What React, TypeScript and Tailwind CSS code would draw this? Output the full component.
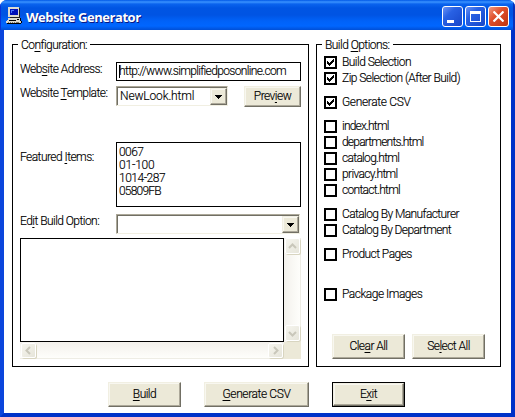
import type { ReactNode } from "react";

function U({ children }: { children: ReactNode }) {
  return <span className="underline decoration-1 underline-offset-[2px]">{children}</span>;
}

const raised =
  "flex items-center justify-center whitespace-nowrap bg-[#ece9d8] border-t border-l border-t-[#f1efe2] border-l-[#f1efe2] border-r border-b border-r-[#716f64] border-b-[#716f64] shadow-[inset_-1px_-1px_0_#aca899,inset_1px_1px_0_#f8f7f0]";

function PushButton({ className, children }: { className: string; children: ReactNode }) {
  return <button className={`${raised} ${className}`}>{children}</button>;
}

function Combo({ className, children }: { className: string; children?: ReactNode }) {
  return (
    <div
      className={`flex h-5 items-stretch border border-t-[#aca899] border-l-[#aca899] border-r-[#f1efe2] border-b-[#f1efe2] bg-white shadow-[inset_1px_1px_0_#716f64] ${className}`}
    >
      <div className="flex flex-1 items-center pl-[3px] tracking-[-0.15px]">{children}</div>
      <div className={`${raised} mt-px w-[17px]`}>
        <svg width="7" height="4" viewBox="0 0 7 4" shapeRendering="crispEdges">
          <path d="M0 0h7v1H6v1H5v1H4v1H3V3H2V2H1V1H0z" />
        </svg>
      </div>
    </div>
  );
}

function Check({ label, checked = false, className = "" }: { label: string; checked?: boolean; className?: string }) {
  return (
    <label className={`flex h-4 items-start ${className}`}>
      <span className="flex size-[13px] shrink-0 items-center justify-center border-2 border-black bg-white">
        {checked && (
          <svg width="7" height="7" viewBox="0 0 7 7" shapeRendering="crispEdges">
            <path d="M0 2h1v1h1v1h1V3h1V2h1V1h1V0h1v3H6v1H5v1H4v1H3v1H2V6H1V5H0z" />
          </svg>
        )}
      </span>
      <span className="ml-[5px] whitespace-nowrap leading-[13px]">{label}</span>
    </label>
  );
}

function ScrollButton({ path, className }: { path: string; className: string }) {
  return (
    <div
      className={`flex items-center justify-center rounded-[2px] border border-white bg-gradient-to-br from-[#f6f5ee] to-[#e6e5da] shadow-[1px_1px_0_#d8d5c0] ${className}`}
    >
      <svg width="9" height="9" viewBox="0 0 9 9" fill="none" stroke="#c9c7ba" strokeWidth="2">
        <path d={path} />
      </svg>
    </div>
  );
}

function Group({ legend, className, children }: { legend: ReactNode; className: string; children: ReactNode }) {
  return (
    <section className={`h-[323px] border border-black ${className}`}>
      <div className="-mt-[7px] flex h-[13px]">
        <span className="ml-[5px] whitespace-nowrap bg-white px-[3px] leading-[15px]">{legend}</span>
      </div>
      {children}
    </section>
  );
}

function ComputerIcon() {
  return (
    <svg width="16" height="17" viewBox="0 0 16 17" shapeRendering="crispEdges">
      <path fill="#dedbd0" d="M2 0h11v10H2z" />
      <path fill="#222" d="M13 1h1v10H4v-1h9z" />
      <path fill="#0010b8" d="M4 2h8v6H4z" />
      <path fill="#4971ff" d="M5 3h3v1H5zM5 4h1v2H5z" />
      <path fill="#dedbd0" d="M2 11h12v3H2zM1 13h14v1H1zM0 14h15v2H0z" />
      <path fill="#000" d="M3 13h7v1H3zM11 12h2v1h-2zM14 11h1v3h-1zM15 14h1v2h-1zM1 16h14v1H1z" />
      <path fill="#77756d" d="M2 15h1v1H2zM4 15h1v1H4zM6 15h1v1H6zM8 15h1v1H8zM10 15h3v1h-3z" />
    </svg>
  );
}

const caption = "flex size-[21px] items-center justify-center rounded-[3px] border border-white";

export default function App() {
  return (
    <div className="h-[417px] w-[515px] overflow-hidden bg-white font-['Roboto','Liberation_Sans',sans-serif] text-[12px] font-light leading-[13px] tracking-[-0.55px] text-black [-webkit-text-stroke:0.15px_black]">
      <div className="flex h-full flex-col overflow-hidden rounded-t-[7px] bg-[#0046e0]">
        <header className="flex h-[30px] shrink-0 items-start bg-[linear-gradient(180deg,#0058e6_0px,#3a93ff_2px,#0a63ee_4px,#0055e3_8px,#0054e3_15px,#0062f8_21px,#0066ff_26px,#004fd6_30px)] pl-[6px] pr-[6px] shadow-[inset_1px_0_0_#0831d9,inset_-2px_0_0_#0831b9]">
          <div className="mt-[7px]">
            <ComputerIcon />
          </div>
          <h1 className="ml-1 mt-[9px] flex-1 whitespace-nowrap font-['Open_Sans',sans-serif] text-[13px] font-bold leading-4 tracking-[-0.45px] text-white [-webkit-text-stroke:0px] [text-shadow:1px_1px_0_#0a1883]">
            Website Generator
          </h1>
          <div className="mt-[6px] flex gap-[2px]">
            <button className={`${caption} bg-[linear-gradient(135deg,#6b93f5,#2861e4_35%,#1746c9)]`}>
              <span className="mr-[5px] mt-[9px] h-[3px] w-[7px] bg-white" />
            </button>
            <button className={`${caption} bg-[linear-gradient(135deg,#6b93f5,#2861e4_35%,#1746c9)]`}>
              <span className="h-[11px] w-[11px] border border-t-[3px] border-white" />
            </button>
            <button className={`${caption} bg-[linear-gradient(135deg,#f09a82,#e0502c_40%,#bd3410)]`}>
              <svg width="11" height="11" viewBox="0 0 11 11" stroke="white" strokeWidth="2.2">
                <path d="M.5.5l10 10M10.500.5l-10 10" />
              </svg>
            </button>
          </div>
        </header>

        <main className="flex min-h-0 flex-1 flex-col border-x-4 border-b-4 border-b-[#0032c8] border-l-[#0b45dc] border-r-[#0030c8] bg-white pl-2 pt-[14px]">
          <div className="flex gap-[7px]">
            <Group className="w-[297px] shrink-0" legend={<>Co<U>n</U>figuration:</>}>
              <div className="flex flex-col pl-[7px] pr-[7px]">
                <div className="mt-[11px] flex h-[19px]">
                  <label className="w-24 whitespace-nowrap pt-px">Web<U>s</U>ite Address:</label>
                  <div className="flex w-[185px] items-center border border-black pl-[2px]">
                    <span className="-mr-px h-[13px] w-px shrink-0 bg-black" />
                    <span className="whitespace-nowrap tracking-[-0.66px]">http://www.simplifiedposonline.com</span>
                  </div>
                </div>
                <div className="mt-[5px] flex h-[21px]">
                  <label className="w-24 whitespace-nowrap pt-px">Website <U>T</U>emplate:</label>
                  <Combo className="w-28">NewLook.html</Combo>
                  <PushButton className="ml-4 w-[57px]">Prev<U>i</U>ew</PushButton>
                </div>
                <div className="mt-[35px] flex h-[65px]">
                  <label className="w-24 whitespace-nowrap pt-[9px]">Featured <U>I</U>tems:</label>
                  <ul className="w-[185px] border border-black pl-[2px] pt-[3px]">
                    <li>0067</li>
                    <li className="tracking-[-0.2px]">01-100</li>
                    <li className="tracking-[-0.5px]">1014-287</li>
                    <li className="tracking-[-0.8px]">05809FB</li>
                  </ul>
                </div>
                <div className="mt-[7px] flex h-5">
                  <label className="w-24 whitespace-nowrap pt-px">Ed<U>i</U>t Build Option:</label>
                  <Combo className="w-[184px]" />
                </div>
                <div className="mt-1 flex h-[104px]">
                  <div className="w-[264px] border border-black bg-white" />
                  <div className="flex w-[17px] flex-col justify-between border-r border-[#eeede5] bg-gradient-to-r from-[#f3f1ec] to-[#fefefb] pb-px pl-px">
                    <ScrollButton className="h-4 w-[15px]" path="M1 6l3.500-3.500L8 6" />
                    <ScrollButton className="h-4 w-[15px]" path="M1 3l3.500 3.500L8 3" />
                  </div>
                </div>
                <div className="flex h-[17px]">
                  <div className="flex w-[264px] justify-between border-b border-[#eeede5] bg-gradient-to-b from-[#f3f1ec] to-[#fefefb] pl-px pr-px pt-px">
                    <ScrollButton className="h-[15px] w-[15px]" path="M6 1L2.500 4.500 6 8" />
                    <ScrollButton className="h-[15px] w-[15px]" path="M3 1l3.500 3.500L3 8" />
                  </div>
                  <div className="w-[17px] bg-[#ece9d8]" />
                </div>
              </div>
            </Group>

            <Group className="w-[185px] shrink-0" legend={<>Build <U>O</U>ptions:</>}>
              <div className="pl-[7px] pt-[5px]">
                <Check checked label="Build Selection" />
                <Check checked label="Zip Selection (After Build)" />
                <Check checked className="mt-2 tracking-[-0.35px]" label="Generate CSV" />
                <Check className="mt-2 tracking-[-0.8px]" label="index.html" />
                <Check className="tracking-[-0.8px]" label="departments.html" />
                <Check className="tracking-[-0.7px]" label="catalog.html" />
                <Check className="tracking-[-0.65px]" label="privacy.html" />
                <Check className="tracking-[-0.7px]" label="contact.html" />
                <Check className="mt-2 tracking-[-0.6px]" label="Catalog By Manufacturer" />
                <Check className="tracking-[-0.63px]" label="Catalog By Department" />
                <Check className="mt-2" label="Product Pages" />
                <Check className="mt-6 tracking-[-0.5px]" label="Package Images" />
                <div className="mt-[30px] flex gap-[7px] pl-2">
                  <PushButton className="h-[25px] w-[73px]">Cle<U>a</U>r All</PushButton>
                  <PushButton className="h-[25px] w-[73px]">Se<U>l</U>ect All</PushButton>
                </div>
              </div>
            </Group>
          </div>

          <div className="mt-[15px] flex h-[25px] pl-24">
            <PushButton className="w-[73px]"><U>B</U>uild</PushButton>
            <PushButton className="ml-[23px] w-[105px] tracking-[-0.4px]"><U>G</U>enerate CSV</PushButton>
            <div className="ml-[23px] flex w-[73px] border border-black">
              <PushButton className="flex-1">E<U>x</U>it</PushButton>
            </div>
          </div>
        </main>
      </div>
    </div>
  );
}
